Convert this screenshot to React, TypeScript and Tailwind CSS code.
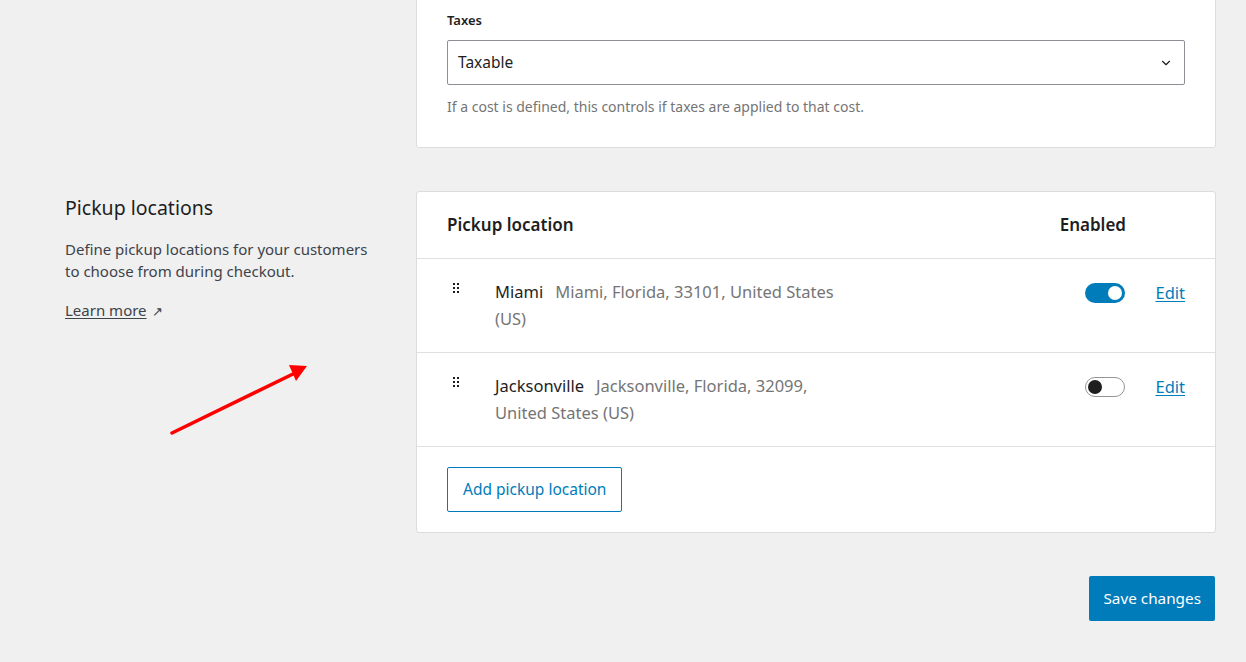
import { ChevronDown } from 'lucide-react';

const locations = [
  { name: 'Miami', address: 'Miami, Florida, 33101, United States (US)', enabled: true },
  { name: 'Jacksonville', address: 'Jacksonville, Florida, 32099, United States (US)', enabled: false },
];

function DragHandle() {
  return (
    <svg width="8" height="12" viewBox="0 0 8 12" className="mt-[4px] shrink-0 fill-[#1e1e1e]">
      <rect x="1" y="1" width="2" height="2" />
      <rect x="5" y="1" width="2" height="2" />
      <rect x="1" y="5" width="2" height="2" />
      <rect x="5" y="5" width="2" height="2" />
      <rect x="1" y="9" width="2" height="2" />
      <rect x="5" y="9" width="2" height="2" />
    </svg>
  );
}

function Toggle({ on }: { on: boolean }) {
  if (on) {
    return (
      <div className="w-[40px] h-[20px] rounded-full bg-[#007cba] flex items-center justify-end pr-[3px]">
        <div className="w-[14px] h-[14px] rounded-full bg-white" />
      </div>
    );
  }
  return (
    <div className="w-[40px] h-[20px] rounded-full border border-[#949494] bg-white flex items-center pl-[2px]">
      <div className="w-[14px] h-[14px] rounded-full bg-[#1e1e1e]" />
    </div>
  );
}

export default function App() {
  return (
    <div
      className="relative min-h-[662px] w-full bg-[#f0f0f0] overflow-hidden text-[#1e1e1e]"
      style={{ fontFamily: '"Noto Sans", "Open Sans", sans-serif' }}
    >
      <div className="pl-[416px] pr-[30px]">
        <div className="-mt-[20px] bg-white border border-[#dcdcde] rounded-[3px] px-[30px] pt-[30px] pb-[31px]">
          <div className="text-[13px] font-semibold leading-[18px] mb-[11px]">Taxes</div>
          <div className="h-[45px] border border-[#8c8f94] rounded-[2px] flex items-center justify-between pl-[10px] pr-[11px]">
            <span className="text-[15.5px]">Taxable</span>
            <ChevronDown size={14} strokeWidth={2} />
          </div>
          <p className="mt-[13px] text-[14px] leading-[18px] text-[#757575]">
            If a cost is defined, this controls if taxes are applied to that cost.
          </p>
        </div>
      </div>

      <div className="flex mt-[43px] pr-[30px]">
        <div className="w-[416px] shrink-0 pl-[65px] pr-[42px] pt-[4px]">
          <h2 className="text-[19.5px] leading-[26px]">Pickup locations</h2>
          <p className="mt-[17px] text-[15px] leading-[22px] text-[#3c434a]">
            Define pickup locations for your customers to choose from during checkout.
          </p>
          <a className="inline-block mt-[17px] text-[15px] text-[#3c434a] underline underline-offset-2">
            Learn more
          </a>
          <span className="ml-[5px] text-[13px] text-[#3c434a]">↗</span>
        </div>

        <div className="flex-1 bg-white border border-[#dcdcde] rounded-[3px]">
          <div className="h-[67px] flex items-center justify-between pl-[30px] pr-[89px] border-b border-[#e0e0e0]">
            <span className="text-[17px] font-semibold">Pickup location</span>
            <span className="text-[17px] font-semibold">Enabled</span>
          </div>
          {locations.map((loc) => (
            <div key={loc.name} className="h-[94px] flex items-start pl-[35px] pr-[30px] pt-[19px] border-b border-[#e0e0e0]">
              <DragHandle />
              <div className="ml-[35px] w-[345px] text-[16.5px] leading-[27px]">
                <span className="text-[#1e1e1e] mr-[12px]">{loc.name}</span>
                <span className="text-[#757575]">{loc.address}</span>
              </div>
              <div className="ml-auto flex items-center gap-[30px] mt-[3px]">
                <Toggle on={loc.enabled} />
                <a className="text-[16.5px] text-[#007cba] underline underline-offset-2">Edit</a>
              </div>
            </div>
          ))}
          <div className="px-[30px] pt-[20px] pb-[20px]">
            <div className="inline-flex items-center h-[45px] px-[15px] rounded-[2px] border border-solid border-[#007cba] text-[#007cba] text-[15.5px]">
              Add pickup location
            </div>
          </div>
        </div>
      </div>

      <div className="flex justify-end pr-[31px] mt-[43px]">
        <div className="inline-flex items-center h-[45px] px-[14px] bg-[#007cba] rounded-[2px] text-white text-[15.3px]">
          Save changes
        </div>
      </div>

      <svg className="absolute left-[165px] top-[360px]" width="150" height="80" viewBox="0 0 150 80">
        <line x1="7" y1="73" x2="128" y2="14" stroke="#ff0000" strokeWidth="3.5" strokeLinecap="round" />
        <polygon points="142,6 124,5 131,21" fill="#ff0000" />
      </svg>
    </div>
  );
}
